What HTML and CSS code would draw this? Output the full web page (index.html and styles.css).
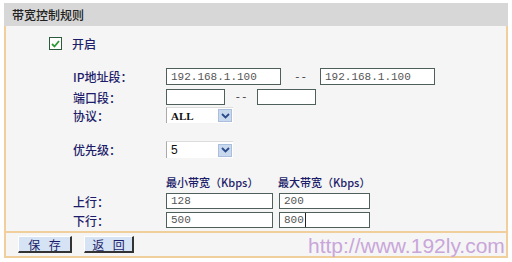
FILE: index.html
```html
<!DOCTYPE html>
<html lang="zh-CN">
<head>
    <meta charset="UTF-8">
    <title>带宽控制规则</title>
    <link rel="stylesheet" href="styles.css">
</head>
<body>
    <div class="frame">
        <div class="title-bar">带宽控制规则</div>
        <div class="panel">
            <div class="enable-row">
                <span class="check"><svg width="9" height="8" viewBox="0 0 9 8"><path d="M1 4 L3.5 6.5 L8 1" fill="none" stroke="#2f9a35" stroke-width="1.8"/></svg></span>
                <span class="enable-text">开启</span>
            </div>

            <div class="row row-ip">
                <span class="label">IP地址段：</span>
                <input class="field ip" type="text" value="192.168.1.100">
                <span class="dash">--</span>
                <input class="field ip" type="text" value="192.168.1.100">
            </div>
            <div class="row row-port">
                <span class="label">端口段：</span>
                <input class="field port" type="text" value="">
                <span class="dash">--</span>
                <input class="field port" type="text" value="">
            </div>
            <div class="row row-proto">
                <span class="label">协议：</span>
                <div class="select"><span class="select-value">ALL</span><span class="arrow"><svg width="9" height="6" viewBox="0 0 9 6"><path d="M1 1 L4.5 4.5 L8 1" fill="none" stroke="#2a4a8a" stroke-width="1.8"/></svg></span></div>
            </div>
            <div class="row row-prio">
                <span class="label">优先级：</span>
                <div class="select"><span class="select-value">5</span><span class="arrow"><svg width="9" height="6" viewBox="0 0 9 6"><path d="M1 1 L4.5 4.5 L8 1" fill="none" stroke="#2a4a8a" stroke-width="1.8"/></svg></span></div>
            </div>

            <div class="row row-head">
                <span class="label"></span>
                <span class="col-head">最小带宽（Kbps）</span>
                <span class="col-head">最大带宽（Kbps）</span>
            </div>
            <div class="row row-bw">
                <span class="label">上行：</span>
                <input class="field bw-min" type="text" value="128">
                <input class="field bw-max" type="text" value="200">
            </div>
            <div class="row row-bw2">
                <span class="label">下行：</span>
                <input class="field bw-min" type="text" value="500">
                <div class="field bw-max caret-box">800<span class="caret"></span></div>
            </div>
        </div>
        <div class="button-bar">
            <button class="btn">保 存</button>
            <button class="btn">返 回</button>
        </div>
        <div class="watermark">http://www.192ly.com</div>
    </div>
</body>
</html>
```

FILE: styles.css
```css
* {
    margin: 0;
    padding: 0;
    box-sizing: border-box;
}
body {
    background-color: #fff;
    font-family: "Noto Sans CJK SC", "Liberation Sans", sans-serif;
    font-size: 12px;
    color: #1c1c6a;
}
.frame {
    position: relative;
    width: 504px;
    margin: 3px 0 0 4px;
}
.title-bar {
    height: 23px;
    background-color: #d7d7d7;
    color: #222;
    font-size: 12px;
    font-weight: 500;
    line-height: 23px;
    padding-left: 8px;
}
.panel {
    background-color: #f5f5f5;
    border-left: 2px solid #f1cf9c;
    border-right: 2px solid #f1cf9c;
    border-bottom: 2px solid #f1cf9c;
    height: 207px;
    padding-top: 11px;
}
.enable-row {
    display: flex;
    align-items: center;
    height: 13px;
    padding-left: 43px;
}
.check {
    display: flex;
    align-items: center;
    justify-content: center;
    width: 13px;
    height: 13px;
    border: 1px solid #2b5a3c;
    background: #fff;
}
.enable-text {
    margin-left: 10px;
    color: #1c1c6a;
    font-weight: 500;
}
.row {
    display: flex;
    align-items: center;
    padding-left: 67px;
}
.label {
    width: 93px;
    flex: none;
    font-weight: 500;
}
.row-ip {
    margin-top: 18px;
    height: 17px;
}
.row-port {
    margin-top: 4px;
    height: 16px;
}
.row-proto {
    margin-top: 2px;
    height: 16px;
}
.row-prio {
    margin-top: 18px;
    height: 17px;
}
.row-head {
    margin-top: 17px;
    height: 14px;
}
.row-bw {
    margin-top: 4px;
    height: 16px;
}
.row-bw2 {
    margin-top: 3px;
    height: 16px;
}
.field {
    height: 16px;
    border: 1px solid #4f5f5c;
    background: #fff;
    font-family: "Liberation Mono", monospace;
    font-size: 11px;
    color: #555;
    padding: 0 4px;
    outline: none;
}
.caret-box {
    display: flex;
    align-items: center;
}
.caret {
    width: 1px;
    height: 14px;
    background: #222;
    margin-left: 1px;
}
.row-ip .field {
    height: 17px;
}
.ip {
    width: 115px;
}
.port {
    width: 59px;
}
.dash {
    color: #444;
    font-family: "Liberation Mono", monospace;
    font-size: 11px;
    width: 39px;
    text-align: center;
}
.row-port .dash {
    width: 32px;
}
.select {
    display: flex;
    align-items: center;
    justify-content: space-between;
    width: 67px;
    height: 16px;
    background: #fff;
    border-top: 1px solid #ddd;
    border-left: 1px solid #aaa;
    padding: 0 1px 0 4px;
}
.row-prio .select {
    height: 17px;
}
.select-value {
    font-family: "Liberation Serif", serif;
    font-weight: bold;
    font-size: 11px;
    color: #111;
}
.row-prio .select-value {
    font-family: "Liberation Sans", sans-serif;
    font-weight: normal;
    font-size: 12px;
}
.arrow {
    display: flex;
    align-items: center;
    justify-content: center;
    width: 14px;
    height: 13px;
    background: #c8d9ee;
    border: 1px solid #a9bfdc;
}
.col-head {
    font-size: 11px;
    font-weight: 500;
    color: #1c1c6a;
    width: 112px;
}
.bw-min {
    width: 107px;
}
.bw-max {
    width: 91px;
    margin-left: 6px;
}
.button-bar {
    display: flex;
    gap: 12px;
    height: 25px;
    align-items: center;
    padding-left: 12px;
    border-left: 2px solid #f1cf9c;
    border-right: 2px solid #f1cf9c;
    border-bottom: 2px solid #f1cf9c;
    background: #f5f5f5;
}
.btn {
    width: 54px;
    height: 17px;
    background: #d5e3f4;
    border-top: 1px solid #fff;
    border-left: 1px solid #fff;
    border-right: 2px solid #333;
    border-bottom: 2px solid #333;
    font-family: "Noto Sans CJK SC", sans-serif;
    font-size: 12px;
    line-height: 13px;
    word-spacing: 6px;
    color: #1c1c6a;
}
.btn + .btn {
    width: 50px;
}
.watermark {
    position: absolute;
    left: 304px;
    top: 231px;
    font-family: "Liberation Sans", sans-serif;
    font-size: 21px;
    line-height: 24px;
    white-space: nowrap;
    color: #c9a6da;
}
```
